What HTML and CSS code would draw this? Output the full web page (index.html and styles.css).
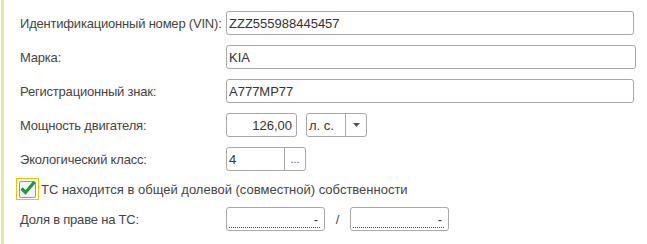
FILE: index.html
```html
<!DOCTYPE html>
<html lang="ru">
<head>
    <meta charset="UTF-8">
    <title>Транспортное средство</title>
    <link rel="stylesheet" href="styles.css">
</head>
<body>
    <div class="page">
        <div class="row">
            <div class="label">Идентификационный номер (VIN):</div>
            <div class="field wide">ZZZ555988445457</div>
        </div>
        <div class="row">
            <div class="label">Марка:</div>
            <div class="field wide w2">KIA</div>
        </div>
        <div class="row">
            <div class="label">Регистрационный знак:</div>
            <div class="field wide">А777МР77</div>
        </div>
        <div class="row">
            <div class="label">Мощность двигателя:</div>
            <div class="field num">126,00</div>
            <div class="field combo">
                <span class="combo-text">л. с.</span>
                <span class="btn arrow"><svg width="7" height="4" viewBox="0 0 7 4"><path d="M0 0h7L3.5 4z" fill="#555"/></svg></span>
            </div>
        </div>
        <div class="row">
            <div class="label">Экологический класс:</div>
            <div class="field choice">
                <span class="combo-text">4</span>
                <span class="btn dots">...</span>
            </div>
        </div>
        <div class="row-check">
            <span class="check-focus">
                <span class="check-box">
                    <svg width="18" height="16" viewBox="0 0 18 16"><path d="M2.5 8.5l4 4L15.5 2" fill="none" stroke="#1f9a3a" stroke-width="3.2"/></svg>
                </span>
            </span>
            <span class="check-label">ТС находится в общей долевой (совместной) собственности</span>
        </div>
        <div class="row">
            <div class="label">Доля в праве на ТС:</div>
            <div class="field share">-</div>
            <span class="slash">/</span>
            <div class="field share">-</div>
        </div>
    </div>
</body>
</html>
```

FILE: styles.css
```css
html, body {
    margin: 0;
    padding: 0;
    background: #ffffff;
    font: 13px/1 "Liberation Sans", Arial, sans-serif;
    color: #454545;
}
.page {
    margin-left: 1px;
    border-left: 2px solid #efe296;
    box-shadow: inset 1px 0 0 #e2e2e2;
    padding: 11px 11px 20px 17px;
    height: 213px;
}
.row {
    display: flex;
    align-items: center;
    height: 24px;
    margin-bottom: 10px;
}
.label {
    width: 206px;
    flex: none;
    white-space: nowrap;
    letter-spacing: -0.2px;
}
.field {
    box-sizing: border-box;
    height: 24px;
    border: 1px solid #a8a8a8;
    border-radius: 3px;
    padding: 0 2px;
    display: flex;
    align-items: center;
    color: #333333;
    background: #ffffff;
    position: relative;
}
.wide {
    width: 408px;
}
.w2 {
    width: 410px;
}
.num {
    width: 71px;
    justify-content: flex-end;
    padding-right: 4px;
}
.combo {
    width: 61px;
    margin-left: 9px;
    padding: 0;
}
.choice {
    width: 80px;
    padding: 0;
}
.combo-text {
    flex: 1;
    padding-left: 2px;
}
.btn {
    width: 20px;
    height: 100%;
    border-left: 1px solid #a8a8a8;
    display: flex;
    align-items: center;
    justify-content: center;
}
.dots {
    font-size: 11px;
    color: #555555;
}
.row-check {
    display: flex;
    align-items: center;
    height: 22px;
    margin: -3px 0 7px -4px;
}
.check-focus {
    box-sizing: border-box;
    width: 23px;
    height: 22px;
    border: 1px solid #f2c200;
    display: flex;
    align-items: center;
    justify-content: center;
}
.check-box {
    box-sizing: border-box;
    width: 17px;
    height: 17px;
    border: 1px solid #9a9a9a;
    border-radius: 2px;
    background: #f4f4f4;
    position: relative;
}
.check-box svg {
    position: absolute;
    left: -1px;
    top: -2px;
}
.check-label {
    margin-left: 2px;
}
.share {
    width: 99px;
    justify-content: flex-end;
    padding-right: 6px;
}
.share::after {
    content: "";
    position: absolute;
    left: 2px;
    right: 4px;
    bottom: 2px;
    height: 1px;
    background: repeating-linear-gradient(90deg, #ff0000 0 1px, #ffffff 1px 2px);
}
.slash {
    width: 25px;
    text-align: center;
}
```
